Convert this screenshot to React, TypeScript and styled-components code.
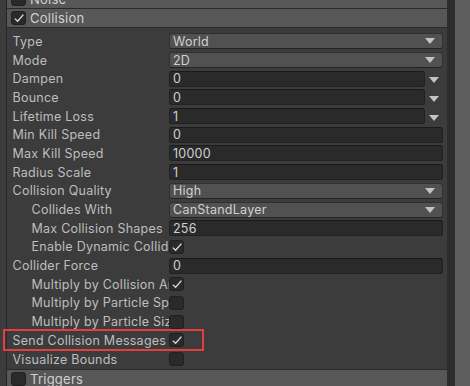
import React from "react";
import styled, { createGlobalStyle } from "styled-components";

type RowKind = "dropdown" | "curve" | "float" | "check";

interface RowData {
  label: string;
  kind: RowKind;
  value?: string;
  checked?: boolean;
  indent?: boolean;
  highlight?: boolean;
}

const ROWS: RowData[] = [
  { label: "Type", kind: "dropdown", value: "World" },
  { label: "Mode", kind: "dropdown", value: "2D" },
  { label: "Dampen", kind: "curve", value: "0" },
  { label: "Bounce", kind: "curve", value: "0" },
  { label: "Lifetime Loss", kind: "curve", value: "1" },
  { label: "Min Kill Speed", kind: "float", value: "0" },
  { label: "Max Kill Speed", kind: "float", value: "10000" },
  { label: "Radius Scale", kind: "float", value: "1" },
  { label: "Collision Quality", kind: "dropdown", value: "High" },
  { label: "Collides With", kind: "dropdown", value: "CanStandLayer", indent: true },
  { label: "Max Collision Shapes", kind: "float", value: "256", indent: true },
  { label: "Enable Dynamic Colliders", kind: "check", checked: true, indent: true },
  { label: "Collider Force", kind: "float", value: "0" },
  { label: "Multiply by Collision Angle", kind: "check", checked: true, indent: true },
  { label: "Multiply by Particle Speed", kind: "check", checked: false, indent: true },
  { label: "Multiply by Particle Size", kind: "check", checked: false, indent: true },
  { label: "Send Collision Messages", kind: "check", checked: true, highlight: true },
  { label: "Visualize Bounds", kind: "check", checked: false },
];

const Tick = () => (
  <svg width="12" height="12" viewBox="0 0 12 12">
    <polyline points="1.8,6.6 4.6,9.3 10.4,2.6" fill="none" stroke="#dcdcdc" strokeWidth="1.3" />
  </svg>
);

const Arrow = () => (
  <svg width="10" height="6" viewBox="0 0 10 6">
    <polygon points="0,0 10,0 5,6" fill="#c4c4c4" />
  </svg>
);

const App = () => {
  return (
    <>
      <GlobalStyle />
      <Frame>
        <Gutter />
        <Inspector>
          <ModuleHeader>
            <CheckBox />
            <HeaderTitle>Noise</HeaderTitle>
          </ModuleHeader>
          <ModuleHeader>
            <CheckBox>
              <Tick />
            </CheckBox>
            <HeaderTitle>Collision</HeaderTitle>
          </ModuleHeader>
          <Rows>
            {ROWS.map((row) => (
              <Row key={row.label}>
                {row.highlight && <Highlight />}
                <Label $indent={row.indent}>{row.label}</Label>
                <Value>
                  {row.kind === "dropdown" && (
                    <Dropdown>
                      <span>{row.value}</span>
                      <Arrow />
                    </Dropdown>
                  )}
                  {row.kind === "float" && <Field>{row.value}</Field>}
                  {row.kind === "curve" && (
                    <>
                      <Field>{row.value}</Field>
                      <CurveArrow>
                        <Arrow />
                      </CurveArrow>
                    </>
                  )}
                  {row.kind === "check" && <CheckBox>{row.checked && <Tick />}</CheckBox>}
                </Value>
              </Row>
            ))}
          </Rows>
          <ModuleHeader $top>
            <CheckBox />
            <HeaderTitle>Triggers</HeaderTitle>
          </ModuleHeader>
        </Inspector>
        <Divider />
        <Scrollbar />
      </Frame>
    </>
  );
};

export default App;

const GlobalStyle = createGlobalStyle`
  html, body {
    margin: 0;
    padding: 0;
    background: #3c3c3c;
    overflow: hidden;
  }
  body {
    font-family: Inter, "Noto Sans", "DejaVu Sans", sans-serif;
    font-size: 12.5px;
    letter-spacing: 0.25px;
    color: #bebebe;
  }
`;

const Frame = styled.div`
  display: flex;
  width: 470px;
  height: 386px;
  overflow: hidden;
  background: #3c3c3c;
`;

const Gutter = styled.div`
  width: 6px;
  flex-shrink: 0;
  border-right: 1px solid #262626;
`;

const Inspector = styled.div`
  flex: 1;
  display: flex;
  flex-direction: column;
  margin-top: -10px;
  min-width: 0;
`;

const ModuleHeader = styled.div<{ $top?: boolean }>`
  height: 18px;
  flex-shrink: 0;
  display: flex;
  align-items: center;
  gap: 4px;
  padding-left: 4px;
  background: #575757;
  border-bottom: 1px solid #2a2a2a;
  border-top: ${(p) => (p.$top ? "1px solid #2a2a2a" : "none")};
  margin-top: ${(p) => (p.$top ? "1px" : "0")};
  font-size: 13px;
  color: #d0d0d0;
`;

const HeaderTitle = styled.span`
  line-height: 1;
`;

const CheckBox = styled.div`
  position: relative;
  width: 15px;
  height: 14px;
  flex-shrink: 0;
  box-sizing: border-box;
  background: #2a2a2a;
  border: 1px solid #202020;
  border-radius: 3px;
  display: flex;
  align-items: center;
  justify-content: center;
`;

const Rows = styled.div`
  display: flex;
  flex-direction: column;
  padding-top: 4px;
`;

const Row = styled.div`
  position: relative;
  height: 18.7px;
  display: flex;
  align-items: center;
`;

const Highlight = styled.div`
  position: absolute;
  left: -4px;
  top: -2px;
  width: 201px;
  height: 22px;
  box-sizing: border-box;
  border: 2px solid #e53e3e;
  pointer-events: none;
`;

const Label = styled.div<{ $indent?: boolean }>`
  width: 162px;
  flex-shrink: 0;
  box-sizing: border-box;
  padding-left: ${(p) => (p.$indent ? "24.5px" : "5.5px")};
  white-space: nowrap;
  overflow: hidden;
  text-overflow: clip;
`;

const Value = styled.div`
  flex: 1;
  display: flex;
  align-items: center;
  padding-right: 4px;
  min-width: 0;
`;

const Field = styled.div`
  flex: 1;
  height: 16px;
  box-sizing: border-box;
  padding-left: 3px;
  display: flex;
  align-items: center;
  background: #2a2a2a;
  border: 1px solid #212121;
  border-top-color: #1a1a1a;
  border-radius: 3px;
  color: #d0d0d0;
`;

const Dropdown = styled.div`
  flex: 1;
  height: 16px;
  box-sizing: border-box;
  padding: 0 7px 0 3px;
  display: flex;
  align-items: center;
  justify-content: space-between;
  background: #515151;
  border: 1px solid #303030;
  border-bottom-color: #242424;
  border-radius: 3px;
  color: #d0d0d0;
`;

const CurveArrow = styled.div`
  width: 18px;
  flex-shrink: 0;
  display: flex;
  justify-content: center;
  padding-top: 3px;
`;

const Divider = styled.div`
  width: 8px;
  flex-shrink: 0;
  background: #2d2d2d;
`;

const Scrollbar = styled.div`
  width: 15px;
  flex-shrink: 0;
  background: #5e5e5e;
`;
